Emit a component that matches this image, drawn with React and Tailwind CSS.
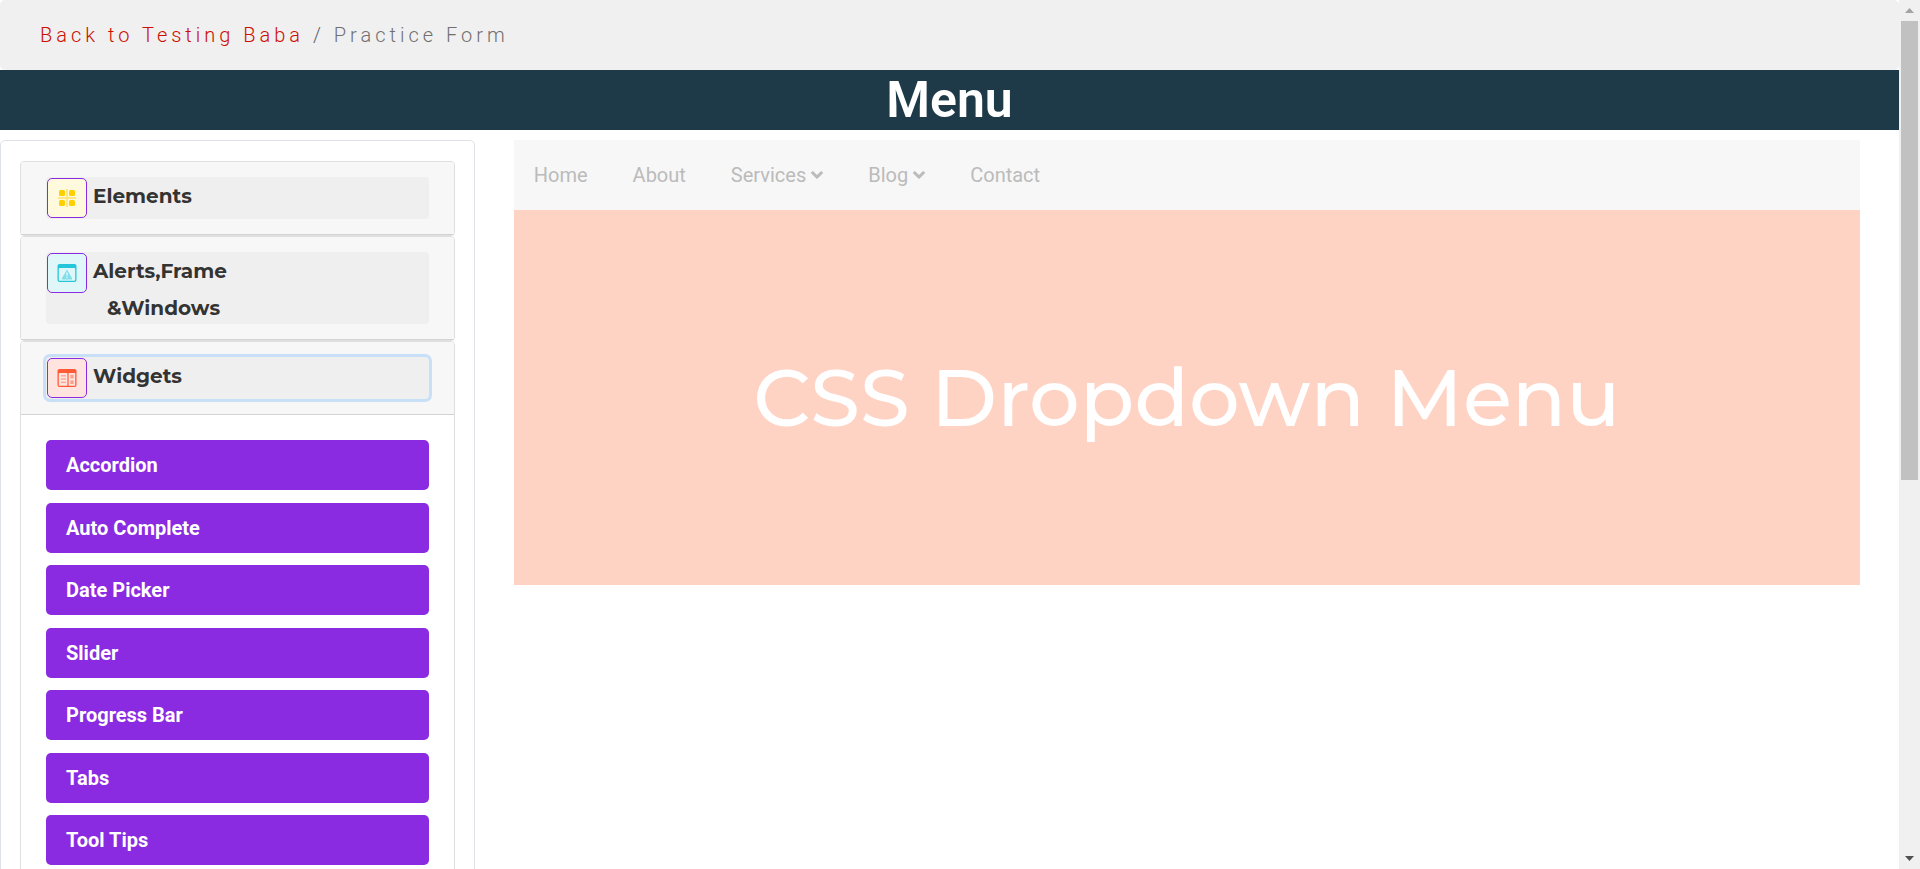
import React from "react";

const ElementsIcon = () => (
  <svg width="20" height="20" viewBox="0 0 20 20" aria-hidden="true">
    <path d="M9 1h2v18H9zM1 9h18v2H1z" fill="#ffe680" />
    <g fill="#ffd000">
      <rect x="2" y="2" width="6" height="6" rx="1.5" />
      <rect x="12" y="2" width="6" height="6" rx="1.5" />
      <rect x="2" y="12" width="6" height="6" rx="1.5" />
      <rect x="12" y="12" width="6" height="6" rx="1.5" />
    </g>
  </svg>
);

const AlertsIcon = () => (
  <svg width="20" height="20" viewBox="0 0 20 20" aria-hidden="true">
    <rect x="0.5" y="1" width="19" height="18" rx="2" fill="#26c6da" />
    <rect x="1.8" y="5" width="16.4" height="12.8" rx="1" fill="#e0f7fa" />
    <path d="M10 7.4l5 8.6H5z" fill="#80deea" stroke="#80deea" strokeLinejoin="round" />
    <path d="M9.3 9.6h1.4v3.2H9.3zM9.3 13.7h1.4v1.4H9.3z" fill="#e0f7fa" />
  </svg>
);

const WidgetsIcon = () => (
  <svg width="20" height="20" viewBox="0 0 20 20" aria-hidden="true">
    <rect x="0.5" y="1" width="19" height="18" rx="2" fill="#ff5a36" />
    <rect x="1.8" y="5" width="8.6" height="12.8" rx="0.5" fill="#ffe3df" />
    <rect x="11.6" y="5" width="6.6" height="12.8" rx="0.5" fill="#ffe3df" />
    <g fill="#ff9d8a">
      <rect x="4" y="7.2" width="5" height="1.2" />
      <rect x="4" y="10.4" width="5" height="1.2" />
      <rect x="4" y="13.8" width="5" height="1.2" />
      <rect x="13.4" y="6.8" width="3.2" height="3.6" />
      <rect x="13.4" y="12.4" width="3.2" height="3.6" />
    </g>
  </svg>
);

const AngleDown = () => (
  <svg width="12" height="20" viewBox="0 0 320 512" fill="currentColor" aria-hidden="true">
    <path d="M143 352.3L7 216.3c-9.4-9.4-9.4-24.6 0-33.9l22.6-22.6c9.4-9.4 24.6-9.4 33.9 0l96.4 96.4 96.4-96.4c9.4-9.4 24.6-9.4 33.9 0l22.6 22.6c9.4 9.4 9.4 24.6 0 33.9l-136 136c-9.2 9.4-24.4 9.4-33.8 0z" />
  </svg>
);

const sections = [
  { id: "elements", lines: ["Elements"], Icon: ElementsIcon, tint: "bg-[#fff9dd]" },
  { id: "alerts", lines: ["Alerts,Frame", "&Windows"], Icon: AlertsIcon, tint: "bg-[#e0f7fa]" },
  {
    id: "widgets",
    lines: ["Widgets"],
    Icon: WidgetsIcon,
    tint: "bg-[#ffe3df]",
    items: ["Accordion", "Auto Complete", "Date Picker", "Slider", "Progress Bar", "Tabs", "Tool Tips"],
  },
];

const navItems = [
  { label: "Home" },
  { label: "About" },
  { label: "Services", menu: true },
  { label: "Blog", menu: true },
  { label: "Contact" },
];

function Section({ lines, Icon, tint, items }) {
  return (
    <div className="rounded-[4px] border border-[#dfdfdf] bg-white">
      <div className="rounded-t-[3px] border-b border-[#d3d3d3] bg-[#f7f7f7] px-[25px] py-[15px]">
        <button
          type="button"
          aria-expanded={Boolean(items)}
          className={`flex min-h-[42px] w-full items-start gap-1.5 rounded-[4px] bg-[#efefef] px-px pt-px text-left outline-none ${
            items ? "ring-[3px] ring-[#c8dff8]" : ""
          }`}
        >
          <span
            className={`flex size-10 shrink-0 items-center justify-center rounded-[5px] border border-[#8a2be2] ${tint}`}
          >
            <Icon />
          </span>
          <span className="-mb-[3px] font-[Montserrat,Inter,sans-serif] text-xl leading-[37px] font-bold text-[#333]">
            {lines.map((line, i) => (
              <span key={line} className={i ? "block pl-3.5" : "block"}>
                {line}
              </span>
            ))}
          </span>
        </button>
      </div>
      {items && (
        <ul className="p-[25px]">
          {items.map((item) => (
            <li key={item} className="odd:mb-[13px] even:mb-3">
              <a
                href="#"
                className="block rounded-[5px] bg-[#8a2be2] px-5 py-2.5 text-xl leading-[30px] font-bold text-white"
              >
                {item}
              </a>
            </li>
          ))}
        </ul>
      )}
    </div>
  );
}

function Scrollbar() {
  return (
    <div className="flex w-[21px] shrink-0 flex-col items-center bg-[#f0f0f0]" aria-hidden="true">
      <div className="flex h-[21px] items-center">
        <svg width="9" height="5" viewBox="0 0 9 5" fill="#a3a3a3">
          <path d="M4.5 0L9 5H0z" />
        </svg>
      </div>
      <div className="flex w-[17px] flex-1 flex-col">
        <div className="h-5/9 bg-[#c1c1c1]" />
      </div>
      <div className="flex h-[21px] items-center">
        <svg width="9" height="5" viewBox="0 0 9 5" fill="#505050">
          <path d="M0 0h9L4.5 5z" />
        </svg>
      </div>
    </div>
  );
}

export default function App() {
  return (
    <div className="flex h-screen overflow-hidden bg-white font-[Roboto,sans-serif] text-xl">
      <div className="min-w-0 flex-1 overflow-hidden">
        <nav
          aria-label="Breadcrumb"
          className="rounded-[5px] bg-[#f0f0f0] px-10 py-5 leading-[30px] font-light tracking-[4px] text-[#5c656d]"
        >
          <a href="#" className="text-[#cc0f00]">
            Back to Testing Baba
          </a>{" "}
          / <span className="text-[#707070]">Practice Form</span>
        </nav>
        <h1 className="bg-[#1e3947] text-center text-[50px] leading-[60px] font-semibold text-white">Menu</h1>

        <div className="mt-2.5 flex items-start">
          <aside className="w-1/4 shrink-0 rounded-[5px] border border-[#dee2e6] px-[19px] py-5">
            {sections.map((section) => (
              <Section key={section.id} {...section} />
            ))}
          </aside>
          <main className="min-w-0 flex-1 px-[39px]">
            <nav aria-label="Main" className="bg-[#f7f7f7]">
              <ul className="flex gap-[5px]">
                {navItems.map(({ label, menu }) => (
                  <li key={label}>
                    <a
                      href="#"
                      className="flex items-center gap-[5px] px-5 py-5 leading-[30px] text-[#bbb]"
                    >
                      {label}
                      {menu && <AngleDown />}
                    </a>
                  </li>
                ))}
              </ul>
            </nav>
            <section className="flex h-[375px] items-center justify-center bg-[#ffd3c4]">
              <h2 className="font-[Montserrat,Inter,sans-serif] text-[80px] font-medium text-white">
                CSS Dropdown Menu
              </h2>
            </section>
          </main>
        </div>
      </div>
      <Scrollbar />
    </div>
  );
}
